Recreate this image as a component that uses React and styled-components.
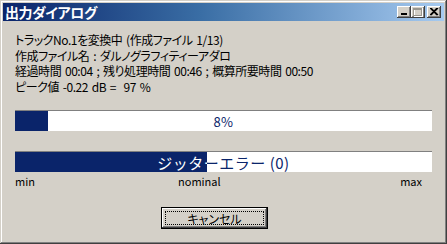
import styled, { createGlobalStyle } from 'styled-components'

const GlobalStyle = createGlobalStyle`
  html, body {
    margin: 0;
    padding: 0;
    background: #d4d0c8;
  }
  body {
    font-family: "Noto Sans CJK JP", "DejaVu Sans", sans-serif;
  }
`

const progress = 8
const jitter = 46

const App = () => {
  return (
    <Window>
      <GlobalStyle />
      <TitleBar>
        <Title>出力ダイアログ</Title>
        <Controls>
          <CtrlButton>
            <svg width='8' height='8' viewBox='0 0 8 8'>
              <rect x='1' y='5' width='6' height='2' fill='#000' />
            </svg>
          </CtrlButton>
          <CtrlButton disabled>
            <svg width='10' height='9' viewBox='0 0 10 9'>
              <rect x='1.5' y='0.5' width='8' height='8' fill='none' stroke='#fff' />
              <rect x='0.5' y='0.5' width='8' height='7' fill='none' stroke='#9a978f' />
              <rect x='0.5' y='0.5' width='8' height='1.5' fill='#9a978f' />
            </svg>
          </CtrlButton>
          <CloseButton>
            <svg width='9' height='8' viewBox='0 0 9 8'>
              <path d='M1 0 L8 7 M0 0 L7 7 M8 0 L1 7 M7 0 L0 7' stroke='#000' strokeWidth='1.2' />
            </svg>
          </CloseButton>
        </Controls>
      </TitleBar>
      <Body>
        <Info>
          <Line>トラックNo.1を変換中 (作成ファイル 1/13)</Line>
          <Line>作成ファイル名 : ダルノグラフィティーアダロ</Line>
          <Line>経過時間 00:04 ; 残り処理時間 00:46 ; 概算所要時間 00:50</Line>
          <Line>ピーク値 -0.22 dB =&nbsp;&nbsp;97 %</Line>
        </Info>
        <Bar>
          <Fill style={{ width: `${progress}%` }} />
          <BarText size={13}>{progress}%</BarText>
        </Bar>
        <Bar $gap>
          <Fill style={{ width: `${jitter}%` }} />
          <BarText size={15}>ジッターエラー (0)</BarText>
          <Clip style={{ width: `${jitter}%` }}>
            <ClipInner>
              <BarText size={15} $inverse>ジッターエラー (0)</BarText>
            </ClipInner>
          </Clip>
        </Bar>
        <Scale>
          <span>min</span>
          <span>nominal</span>
          <Max>max</Max>
        </Scale>
        <Footer>
          <CancelButton>
            <Focus>キャンセル</Focus>
          </CancelButton>
        </Footer>
      </Body>
    </Window>
  )
}

const Window = styled.div`
  width: 447px;
  height: 244px;
  box-sizing: border-box;
  padding: 3px;
  background: #d4d0c8;
  box-shadow: inset -1px -1px #404040, inset 1px 1px #d4d0c8,
    inset -2px -2px #808080, inset 2px 2px #ffffff;
  display: flex;
  flex-direction: column;
`

const TitleBar = styled.div`
  height: 18px;
  display: flex;
  align-items: center;
  justify-content: space-between;
  padding: 0 3px 0 2px;
  background: linear-gradient(to right, #0a246a 0%, #3a6ea5 45%, #a6caf0 100%);
`

const Title = styled.span`
  color: #fff;
  font-weight: bold;
  font-size: 14px;
  font-feature-settings: "palt";
  letter-spacing: -0.4px;
`

const Controls = styled.div`
  display: flex;
  align-items: center;
`

const CtrlButton = styled.div`
  width: 14px;
  height: 12px;
  background: #d4d0c8;
  display: flex;
  align-items: center;
  justify-content: center;
  box-shadow: inset -1px -1px #404040, inset 1px 1px #ffffff,
    inset -2px -2px #808080;
`

const CloseButton = styled(CtrlButton)`
  margin-left: 2px;
`

const Body = styled.div`
  flex: 1;
  display: flex;
  flex-direction: column;
  padding: 11px 12px 0 12px;
`

const Info = styled.div`
  display: flex;
  flex-direction: column;
`

const Line = styled.div`
  font-size: 12px;
  line-height: 15.5px;
  color: #000;
  white-space: nowrap;
  font-feature-settings: "palt";
  letter-spacing: -0.45px;
  word-spacing: 1.5px;
`

const Bar = styled.div`
  position: relative;
  height: 21px;
  margin-top: ${(p) => (p.$gap ? '20px' : '16px')};
  background: #fff;
  border-top: 1px solid #808080;
  box-sizing: border-box;
  overflow: hidden;
`

const Fill = styled.div`
  position: absolute;
  left: 0;
  top: 0;
  bottom: 0;
  background: #0a246a;
`

const BarText = styled.div`
  position: absolute;
  inset: 0;
  width: 417px;
  display: flex;
  align-items: center;
  justify-content: center;
  font-size: ${(p) => p.size}px;
  color: ${(p) => (p.$inverse ? '#fff' : '#0a246a')};
  white-space: nowrap;
  letter-spacing: 0.5px;
`

const Clip = styled.div`
  position: absolute;
  left: 0;
  top: 0;
  bottom: 0;
  overflow: hidden;
`

const ClipInner = styled.div`
  position: relative;
  width: 417px;
  height: 100%;
`

const Scale = styled.div`
  display: grid;
  grid-template-columns: 163px auto 1fr;
  font-size: 11px;
  line-height: 14px;
  padding: 2px 10px 0 0;
  color: #000;
`

const Max = styled.span`
  justify-self: end;
`

const Footer = styled.div`
  display: flex;
  padding: 19px 0 0 146px;
`

const CancelButton = styled.div`
  width: 107px;
  height: 22px;
  box-sizing: border-box;
  border: 1px solid #000;
  background: #d4d0c8;
  box-shadow: inset -1px -1px #404040, inset 1px 1px #ffffff,
    inset -2px -2px #808080;
  padding: 3px;
  display: flex;
`

const Focus = styled.div`
  flex: 1;
  border: 1px dotted #000;
  display: flex;
  align-items: center;
  justify-content: center;
  font-size: 12px;
  color: #000;
  font-feature-settings: "palt";
`

export default App
